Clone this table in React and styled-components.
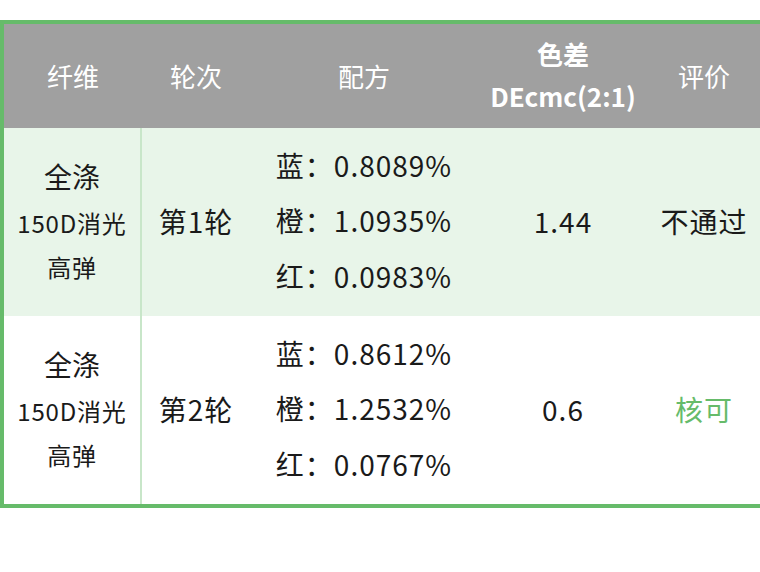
import React from "react";
import styled, { createGlobalStyle } from "styled-components";

const Global = createGlobalStyle`
  html, body { margin: 0; padding: 0; background: #fff; overflow: hidden; }
  body { font-family: "Noto Sans CJK SC", "Noto Sans", sans-serif; color: #1a1a1a; }
`;

const Page = styled.div`
  padding-top: 20px;
  width: 760px;
`;

const Table = styled.div`
  display: grid;
  grid-template-columns: 138px 108px 228px 170px 112px;
  border: 4px solid #66bb6a;
  border-right: none;
`;

const HeadCell = styled.div`
  box-sizing: border-box;
  height: 104px;
  padding-bottom: 2px;
  background: #a0a0a0;
  color: #fff;
  font-size: 26px;
  display: flex;
  flex-direction: column;
  align-items: center;
  justify-content: center;
  text-align: center;
`;

const HeadStrong = styled.div`
  font-weight: 700;
  font-size: ${(p) => p.$size || 26}px;
  line-height: 42px;
`;

const Cell = styled.div`
  box-sizing: border-box;
  height: 188px;
  padding-bottom: ${(p) => (p.$divider ? 4 : 2)}px;
  background: ${(p) => (p.$alt ? "#e8f5e9" : "#fff")};
  border-right: ${(p) => (p.$divider ? "2px solid #c8e6c9" : "none")};
  display: flex;
  flex-direction: column;
  align-items: center;
  justify-content: center;
  text-align: center;
  font-size: 28px;
  letter-spacing: 1px;
  color: ${(p) => (p.$ok ? "#66bb6a" : "#1a1a1a")};
`;

const FiberMain = styled.div`
  font-size: 28px;
  line-height: 50px;
  letter-spacing: 0;
`;

const FiberSub = styled.div`
  font-size: 24px;
  line-height: 44px;
  letter-spacing: 0.8px;
`;

const RecipeLine = styled.div`
  font-size: 28px;
  line-height: 55.5px;
`;

const rows = [
  {
    round: "第1轮",
    recipe: ["蓝：0.8089%", "橙：1.0935%", "红：0.0983%"],
    de: "1.44",
    verdict: "不通过",
    ok: false,
  },
  {
    round: "第2轮",
    recipe: ["蓝：0.8612%", "橙：1.2532%", "红：0.0767%"],
    de: "0.6",
    verdict: "核可",
    ok: true,
  },
];

export default function App() {
  return (
    <Page>
      <Global />
      <Table>
        <HeadCell>纤维</HeadCell>
        <HeadCell>轮次</HeadCell>
        <HeadCell>配方</HeadCell>
        <HeadCell>
          <HeadStrong>色差</HeadStrong>
          <HeadStrong $size={26}>DEcmc(2:1)</HeadStrong>
        </HeadCell>
        <HeadCell>评价</HeadCell>
        {rows.map((r, i) => (
          <React.Fragment key={i}>
            <Cell $alt={i === 0} $divider>
              <FiberMain>全涤</FiberMain>
              <FiberSub>150D消光</FiberSub>
              <FiberSub>高弹</FiberSub>
            </Cell>
            <Cell $alt={i === 0}>{r.round}</Cell>
            <Cell $alt={i === 0}>
              {r.recipe.map((l) => (
                <RecipeLine key={l}>{l}</RecipeLine>
              ))}
            </Cell>
            <Cell $alt={i === 0}>{r.de}</Cell>
            <Cell $alt={i === 0} $ok={r.ok}>
              {r.verdict}
            </Cell>
          </React.Fragment>
        ))}
      </Table>
    </Page>
  );
}
